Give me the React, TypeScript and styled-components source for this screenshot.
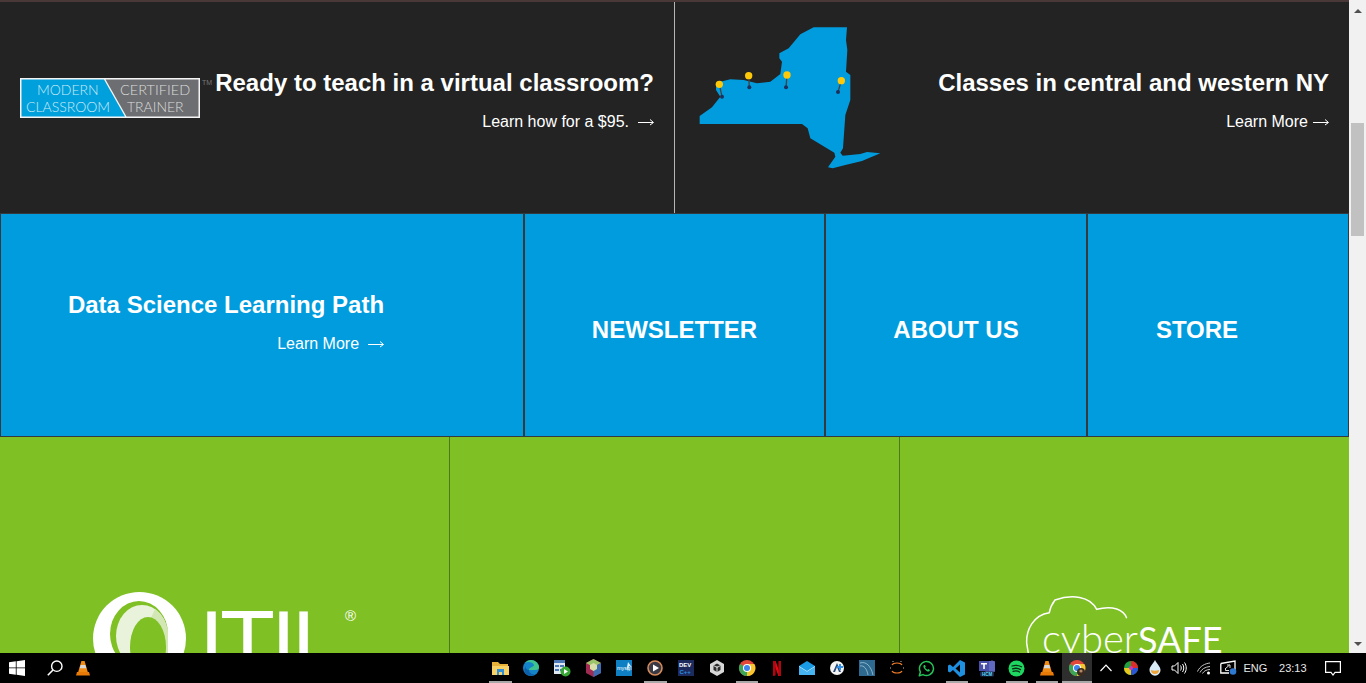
import * as React from 'react';
import styled, { createGlobalStyle } from 'styled-components';

const colors = {
    dark: '#232323',
    blue: '#009cde',
    green: '#7fc025',
    line: '#33393d',
    white: '#ffffff',
};

const GlobalStyle = createGlobalStyle`
    html, body {
        margin: 0;
        padding: 0;
        overflow: hidden;
        background: #000;
    }
    * {
        box-sizing: border-box;
    }
`;

const Frame = styled.div`
    width: 1366px;
    height: 683px;
    display: flex;
    flex-direction: column;
    font-family: 'Liberation Sans', Arial, sans-serif;
    color: ${colors.white};
    overflow: hidden;
`;

const Viewport = styled.div`
    height: 653px;
    display: flex;
    overflow: hidden;
`;

const Content = styled.div`
    width: 1349px;
    display: flex;
    flex-direction: column;
`;

const TopStripe = styled.div`
    height: 2px;
    background: #4a3838;
`;

const DarkRow = styled.div`
    height: 211px;
    display: grid;
    grid-template-columns: 675px 674px;
    background: ${colors.dark};
`;

const DarkCell = styled.div<{ $divider?: boolean }>`
    display: flex;
    justify-content: space-between;
    align-items: flex-start;
    padding: 0 20px;
    border-right: ${(p) => (p.$divider ? '1px solid #b5b5b5' : '0')};
`;

const LogoWrap = styled.div`
    margin-top: 76px;
    display: flex;
`;

const TradeMark = styled.span`
    font-size: 7px;
    color: #777;
    margin: 1px 0 0 2px;
`;

const MapWrap = styled.div`
    margin: 24px 0 0 2px;
    display: flex;
`;

const Promo = styled.div`
    padding-top: 63px;
    text-align: right;
`;

const Heading = styled.div`
    font-size: 24px;
    line-height: 36px;
    font-weight: 700;
`;

const LearnLink = styled.div`
    display: flex;
    justify-content: flex-end;
    align-items: center;
    font-size: 16px;
    line-height: 24px;
    margin-top: 9px;
`;

const LinkArrow = styled.svg<{ $gap: number }>`
    margin-left: ${(p) => p.$gap}px;
`;

const BlueRow = styled.div`
    height: 224px;
    display: grid;
    grid-template-columns: 524px 301px 262px 262px;
    background: ${colors.blue};
`;

const BlueCell = styled.div<{ $shift?: number }>`
    display: flex;
    align-items: center;
    justify-content: center;
    border: 1px solid ${colors.line};
    padding-top: 9px;
    padding-right: ${(p) => p.$shift || 0}px;
`;

const PathBlock = styled.div`
    text-align: right;
    margin: 0 72px 16px 0;
`;

const CellLabel = styled.div`
    font-size: 24px;
    font-weight: 700;
`;

const GreenRow = styled.div`
    flex: 1;
    display: grid;
    grid-template-columns: 450px 450px 449px;
    background: ${colors.green};
`;

const GreenCell = styled.div<{ $divider?: boolean }>`
    overflow: hidden;
    border-right: ${(p) => (p.$divider ? '1px solid #4c7a17' : '0')};
`;

const ItilLogo = styled.svg`
    display: block;
    margin: 150px 0 0 85px;
`;

const CyberLogo = styled.svg`
    display: block;
    margin: 155px 0 0 120px;
`;

const Scrollbar = styled.div`
    width: 17px;
    background: #f1f1f1;
    display: flex;
    flex-direction: column;
    align-items: center;
`;

const ScrollArrow = styled.div<{ $down?: boolean }>`
    height: 17px;
    width: 17px;
    display: flex;
    align-items: center;
    justify-content: center;
    margin-top: ${(p) => (p.$down ? 'auto' : '2px')};
    margin-bottom: ${(p) => (p.$down ? '1px' : '0')};

    &::after {
        content: '';
        border-left: 4px solid transparent;
        border-right: 4px solid transparent;
        border-${(p) => (p.$down ? 'top' : 'bottom')}: 4px solid #505050;
    }
`;

const ScrollThumb = styled.div`
    width: 13px;
    height: 113px;
    margin-top: 104px;
    background: #c1c1c1;
`;

const Taskbar = styled.div`
    height: 30px;
    display: flex;
    align-items: stretch;
    background: #000;
`;

const LeftGroup = styled.div`
    display: flex;
    width: 484.5px;
`;

const StartButton = styled.div`
    width: 34px;
    display: flex;
    align-items: center;
    justify-content: center;
`;

const SearchButton = styled.div`
    width: 42px;
    display: flex;
    align-items: center;
    justify-content: center;
`;

const SearchCone = styled.div`
    width: 14px;
    display: flex;
    align-items: center;
    justify-content: center;
`;

const TaskIcon = styled.div<{ $wide?: boolean; $open?: boolean; $active?: boolean }>`
    position: relative;
    width: ${(p) => (p.$wide ? 31 : 30)}px;
    display: flex;
    align-items: center;
    justify-content: center;
    background: ${(p) => (p.$active ? '#2e2e2e' : 'transparent')};

    &::after {
        content: '';
        display: ${(p) => (p.$open ? 'block' : 'none')};
        position: absolute;
        left: ${(p) => (p.$active ? '0' : '4px')};
        right: ${(p) => (p.$active ? '0' : '4px')};
        bottom: 0;
        height: 2px;
        background: #a8a8a8;
    }
`;

const Tray = styled.div`
    display: flex;
    align-items: center;
    margin-left: 2.5px;
`;

const TrayIcon = styled.div`
    width: 24.4px;
    display: flex;
    align-items: center;
    justify-content: center;
`;

const TrayText = styled.div<{ $width: number }>`
    width: ${(p) => p.$width}px;
    text-align: center;
    font-size: 11px;
    color: #e8e8e8;
`;

const NotifyButton = styled.div`
    width: 36px;
    display: flex;
    align-items: center;
    justify-content: center;
`;

const Arrow = ({ gap }: { gap: number }) => (
    <LinkArrow $gap={gap} width="16" height="8" viewBox="0 0 16 8">
        <path d="M0 4.5h15M12 1.5l3.5 3-3.5 2.5" fill="none" stroke="#fff" strokeWidth="1" />
    </LinkArrow>
);

const Cone = () => (
    <svg width="14" height="16" viewBox="0 0 14 16">
        <path d="M5.4 1h3.2l3.2 11H2.2z" fill="#f08a12" />
        <path d="M4.6 5h4.8l.9 3.3H3.7z" fill="#d9d9d9" />
        <path d="M1 12h12l1 3.5H0z" fill="#e87a08" />
    </svg>
);

const Chrome = ({ badge }: { badge?: boolean }) => (
    <svg width="18" height="18" viewBox="0 0 18 18">
        <circle cx="9" cy="9" r="8" fill="#e2483a" />
        <path d="M9 9 2 13A8 8 0 0 1 2.1 5z" fill="#3aa757" />
        <path d="M9 9l-7 4a8 8 0 0 0 7 4c1.4 0 2.6-.3 3.6-1z" fill="#3aa757" />
        <path d="M9 5h7.4A8 8 0 0 1 9 17z" fill="#f8c52c" />
        <circle cx="9" cy="9" r="4" fill="#fff" />
        <circle cx="9" cy="9" r="3" fill="#3f83ec" />
        {badge && <circle cx="13" cy="13" r="4" fill="#3a2a20" />}
        {badge && <circle cx="13" cy="12" r="1.6" fill="#b58a66" />}
    </svg>
);

const pinned: { key: string; wide?: boolean; open?: boolean; active?: boolean; icon: React.ReactNode }[] = [
    {
        key: 'explorer',
        wide: true,
        open: true,
        icon: (
            <svg width="17" height="15" viewBox="0 0 17 15">
                <path d="M0 1h6l2 2h8v3H0z" fill="#e8b23a" />
                <path d="M0 5h17v9H0z" fill="#f8d267" />
                <path d="M5 8h7v6h-2v-3H7v3H5z" fill="#2f8fd8" />
            </svg>
        ),
    },
    {
        key: 'edge',
        wide: true,
        icon: (
            <svg width="18" height="18" viewBox="0 0 18 18">
                <circle cx="9" cy="9" r="8" fill="#1583c9" />
                <path d="M3 4c3-4 10-4 13 1 2 3 1 6-2 6H7c0-3 5-3 5-5-1-3-6-4-9-2z" fill="#3ec28f" />
                <path d="M7 11c0 3 3 5 6 4-3 3-8 2-10-1-1-2-1-5 1-7-1 2 1 4 3 4z" fill="#0c5fa8" />
            </svg>
        ),
    },
    {
        key: 'tasks',
        wide: true,
        icon: (
            <svg width="18" height="18" viewBox="0 0 18 18">
                <path d="M1 1h11v14H1z" fill="#dfe7f2" />
                <path d="M1 1h11v3H1zM2 6h4v2H2zM7 6h4v2H7zM2 10h4v2H2zM7 10h4v2H7z" fill="#4d78b8" />
                <circle cx="12.5" cy="12.5" r="5" fill="#37a635" />
                <path d="M11 10l4 2.5-4 2.5z" fill="#fff" />
            </svg>
        ),
    },
    {
        key: 'box',
        wide: true,
        icon: (
            <svg width="15" height="18" viewBox="0 0 15 18">
                <path d="M7.5 0 15 4v10l-7.5 4L0 14V4z" fill="#a02a52" />
                <path d="M7.5 0 15 4 7.5 8 0 4z" fill="#9cc46a" />
                <path d="M7.5 8 15 4v10l-7.5 4z" fill="#3d6cb0" />
                <path d="M4 6l3.5-2L11 6v4l-3.5 2L4 10z" fill="#d8dfa8" />
            </svg>
        ),
    },
    {
        key: 'mysql',
        wide: true,
        icon: (
            <svg width="16" height="16" viewBox="0 0 16 16">
                <rect width="16" height="16" fill="#0f7fc4" />
                <text x="1" y="10" fontSize="5.5" fill="#fff" fontFamily="Liberation Sans, sans-serif">
                    mysql
                </text>
                <path d="M12 2c1 2 3 3 3 5l-2-1-1 6-1-5z" fill="#dff1fb" />
            </svg>
        ),
    },
    {
        key: 'player',
        wide: true,
        open: true,
        icon: (
            <svg width="16" height="16" viewBox="0 0 16 16">
                <circle cx="8" cy="8" r="7" fill="#3a3a44" stroke="#d88a5a" strokeWidth="1.6" />
                <path d="M6 4.5 12 8l-6 3.5z" fill="#fff" />
            </svg>
        ),
    },
    {
        key: 'devcpp',
        wide: true,
        icon: (
            <svg width="16" height="16" viewBox="0 0 16 16">
                <rect width="16" height="16" fill="#1c2a5e" />
                <text x="1" y="7" fontSize="6" fontWeight="700" fill="#fff" fontFamily="Liberation Sans, sans-serif">
                    DEV
                </text>
                <text x="1.5" y="14" fontSize="6" fontWeight="700" fill="#2b8fe0" fontFamily="Liberation Sans, sans-serif">
                    C++
                </text>
            </svg>
        ),
    },
    {
        key: 'unity',
        icon: (
            <svg width="14" height="16" viewBox="0 0 14 16">
                <path d="M7 0 14 4v8l-7 4-7-4V4z" fill="#d8d8d8" />
                <path d="M7 3.5 10.5 5.5v4.500L7 12 3.5 10V5.5z" fill="#2c2c2c" />
                <path d="M7 6v6M3.5 5.5 7 7.5l3.5-2" stroke="#d8d8d8" strokeWidth="1" fill="none" />
            </svg>
        ),
    },
    { key: 'chrome', open: true, icon: <Chrome /> },
    {
        key: 'netflix',
        icon: (
            <svg width="8" height="15" viewBox="0 0 8 15">
                <path d="M0 0h2.6L8 15H5.4z" fill="#e50914" />
                <path d="M0 0h2.6v14.6L0 15zM5.4 0H8v15l-2.6-.4z" fill="#b0060f" />
            </svg>
        ),
    },
    {
        key: 'mail',
        icon: (
            <svg width="16" height="14" viewBox="0 0 16 14">
                <path d="M0 5 8 0l8 5v9H0z" fill="#1a9be6" />
                <path d="M0 5l8 5 8-5v1l-8 5-8-5z" fill="#bfe6fb" />
                <path d="M0 6l8 5 8-5v8H0z" fill="#45b4f0" />
            </svg>
        ),
    },
    {
        key: 'studio',
        icon: (
            <svg width="16" height="16" viewBox="0 0 16 16">
                <circle cx="8" cy="8" r="7" fill="#f4f4f4" />
                <path d="M8 3 4 12h2l2-5 2 5h2z" fill="#2a4a78" />
                <path d="M10 4h2v2h2v2h-2v2h-2V8H8V6h2z" fill="#2d8fe8" />
            </svg>
        ),
    },
    {
        key: 'workbench',
        icon: (
            <svg width="16" height="16" viewBox="0 0 16 16">
                <rect width="16" height="16" fill="#2e6a8f" />
                <path d="M1 3c6-2 11 3 13 12M1 6c4-1 7 3 8 9" stroke="#9fc4d8" strokeWidth=".8" fill="none" />
            </svg>
        ),
    },
    {
        key: 'brackets',
        icon: (
            <svg width="14" height="14" viewBox="0 0 14 14">
                <path d="M2 4c1-2 3-2 5-2s4 0 5 2" stroke="#ee7a2a" strokeWidth="1.2" fill="none" />
                <path d="M2 10c1 2 3 2 5 2s4 0 5-2" stroke="#ee7a2a" strokeWidth="1.2" fill="none" />
                <path d="M0 7h1M13 7h1M3 0v1M11 0v1" stroke="#bbb" strokeWidth="1" />
            </svg>
        ),
    },
    {
        key: 'whatsapp',
        icon: (
            <svg width="17" height="17" viewBox="0 0 17 17">
                <path
                    d="M1.3 15.7 2.4 12A7 7 0 1 1 5 14.6z"
                    fill="none"
                    stroke="#25c25a"
                    strokeWidth="1.5"
                    strokeLinejoin="round"
                />
                <path
                    d="M6 5c-1 1-.8 2.4.8 4.2S10 12 11.3 11.3l.7-1.300-1.800-1-.8.8C8.500 9.500 7.500 8.500 7.100 7.600l.7-.8L7 5z"
                    fill="#25c25a"
                />
            </svg>
        ),
    },
    {
        key: 'vscode',
        open: true,
        icon: (
            <svg width="17" height="17" viewBox="0 0 17 17">
                <path
                    d="M12 0 17 2.4v12.2L12 17 5 10l-3 2.5-2-1V5.5l2-1L5 7zM12 4.5 7.5 8.5l4.5 4z"
                    fill="#1f8fe0"
                />
            </svg>
        ),
    },
    {
        key: 'teams',
        icon: (
            <svg width="18" height="18" viewBox="0 0 18 18">
                <circle cx="14" cy="3.5" r="2" fill="#7b83d8" />
                <rect x="7" y="2" width="10" height="11" rx="1" fill="#6068c0" />
                <rect x="1" y="2" width="10" height="10" fill="#4a50a8" />
                <path d="M3 4h6v1.5H6.8V10H5.2V5.5H3z" fill="#fff" />
                <rect x="2" y="12.5" width="14" height="5" rx="1" fill="#162a4a" />
                <text x="4" y="16.8" fontSize="4.5" fontWeight="700" fill="#5fd4f4" fontFamily="Liberation Sans, sans-serif">
                    HCM
                </text>
            </svg>
        ),
    },
    {
        key: 'spotify',
        open: true,
        icon: (
            <svg width="17" height="17" viewBox="0 0 17 17">
                <circle cx="8.5" cy="8.5" r="8" fill="#1ed760" />
                <path
                    d="M4 6c3-1 7-.6 9.5.8M4.5 8.8c2.5-.8 6-.5 8 .8M5 11.3c2-.6 5-.4 6.5.7"
                    stroke="#0c2a14"
                    strokeWidth="1.3"
                    fill="none"
                    strokeLinecap="round"
                />
            </svg>
        ),
    },
    { key: 'vlc', open: true, icon: <Cone /> },
    { key: 'active-chrome', open: true, active: true, icon: <Chrome badge /> },
];

export default function App() {
    return (
        <Frame>
            <GlobalStyle />
            <Viewport>
                <Content>
                    <TopStripe />
                    <DarkRow>
                        <DarkCell $divider>
                            <LogoWrap>
                                <svg width="180" height="40" viewBox="0 0 180 40">
                                    <rect width="180" height="40" fill="#f4f4f4" />
                                    <path d="M1.5 1.5h82.5l21 37H1.5z" fill="#00a0dc" />
                                    <path d="M85.5 1.5h93v37h-72z" fill="#6d6e71" />
                                    <g fontFamily="Lato, sans-serif" fontWeight="300" fontSize="14" fill="#cfeaf6">
                                        <text x="17" y="17">MODERN</text>
                                        <text x="6" y="33.5">CLASSROOM</text>
                                    </g>
                                    <g fontFamily="Lato, sans-serif" fontWeight="300" fontSize="14.5" fill="#dcdcdc">
                                        <text x="100" y="17">CERTIFIED</text>
                                        <text x="107" y="33.5" fontSize="14">TRAINER</text>
                                    </g>
                                </svg>
                                <TradeMark>TM</TradeMark>
                            </LogoWrap>
                            <Promo>
                                <Heading>Ready to teach in a virtual classroom?</Heading>
                                <LearnLink>
                                    Learn how for a $95.
                                    <Arrow gap={9} />
                                </LearnLink>
                            </Promo>
                        </DarkCell>
                        <DarkCell>
                            <MapWrap>
                                <svg width="190" height="145" viewBox="80 78 570 435">
                                    <path
                                        d="M430 82 530 82 527 120 531 150 527 215 540 225 540 300 525 345 518 445 510 458 517 467 570 462 590 456 630 460 575 483 525 495 487 505 473 502 495 470 492 458 420 415 412 385 395 372 88 372 88 348 125 322 150 290 137 270 137 255 150 245 180 238 220 240 260 250 300 245 330 222 335 185 327 175 327 160 355 145 390 103Z"
                                        fill="#009cde"
                                    />
                                    <g stroke="#444" strokeWidth="4" fill="none">
                                        <path d="M147 253 155 290M235 227 237 262M350 225 347 262M513 242 503 276" />
                                    </g>
                                    <g fill="#1e2f5c">
                                        <circle cx="155" cy="290" r="6" />
                                        <circle cx="237" cy="262" r="6" />
                                        <circle cx="347" cy="262" r="6" />
                                        <circle cx="503" cy="276" r="6" />
                                    </g>
                                    <g fill="#ffc90a">
                                        <circle cx="147" cy="253" r="11" />
                                        <circle cx="235" cy="227" r="11" />
                                        <circle cx="350" cy="225" r="11" />
                                        <circle cx="513" cy="242" r="11" />
                                    </g>
                                </svg>
                            </MapWrap>
                            <Promo>
                                <Heading>Classes in central and western NY</Heading>
                                <LearnLink>
                                    Learn More
                                    <Arrow gap={5} />
                                </LearnLink>
                            </Promo>
                        </DarkCell>
                    </DarkRow>
                    <BlueRow>
                        <BlueCell>
                            <PathBlock>
                                <Heading>Data Science Learning Path</Heading>
                                <LearnLink>
                                    Learn More
                                    <Arrow gap={9} />
                                </LearnLink>
                            </PathBlock>
                        </BlueCell>
                        <BlueCell>
                            <CellLabel>NEWSLETTER</CellLabel>
                        </BlueCell>
                        <BlueCell>
                            <CellLabel>ABOUT US</CellLabel>
                        </BlueCell>
                        <BlueCell $shift={42}>
                            <CellLabel>STORE</CellLabel>
                        </BlueCell>
                    </BlueRow>
                    <GreenRow>
                        <GreenCell $divider>
                            <ItilLogo width="290" height="66" viewBox="85 587 290 66">
                                <circle cx="139.5" cy="638.5" r="46.5" fill="#fff" />
                                <ellipse cx="139" cy="634" rx="29" ry="33" fill={colors.green} />
                                <ellipse cx="142" cy="636" rx="26" ry="31" fill="#e9f3dc" />
                                <path d="M155 609A26 31 0 0 1 168 636V653H150V620Z" fill="#d3e7b4" />
                                <ellipse cx="148" cy="647" rx="18" ry="30" fill={colors.green} />
                                <text
                                    x="199"
                                    y="674"
                                    fontFamily="Liberation Sans, sans-serif"
                                    fontSize="90"
                                    letterSpacing="-4"
                                    fill="#fff"
                                >
                                    ITIL
                                </text>
                                <text x="345" y="621" fontFamily="Liberation Sans, sans-serif" fontSize="15" fill="#fff">
                                    ®
                                </text>
                            </ItilLogo>
                        </GreenCell>
                        <GreenCell $divider />
                        <GreenCell>
                            <CyberLogo width="220" height="61" viewBox="1020 592 220 61">
                                <path
                                    d="M1126.7 618.3C1124 610 1113 605 1096.7 609.3C1090 596 1071.7 594 1055 600C1052 604 1050 608 1049.3 612.7C1033.3 615 1026 630 1026.7 643.3L1028.3 653"
                                    fill="none"
                                    stroke="#fff"
                                    strokeWidth="1.5"
                                />
                                <text x="1042" y="653" fontFamily="Lato, sans-serif" fill="#fff">
                                    <tspan fontWeight="300" fontSize="40">cyber</tspan>
                                    <tspan fontWeight="400" fontSize="36">SAFE</tspan>
                                </text>
                            </CyberLogo>
                        </GreenCell>
                    </GreenRow>
                </Content>
                <Scrollbar>
                    <ScrollArrow />
                    <ScrollThumb />
                    <ScrollArrow $down />
                </Scrollbar>
            </Viewport>
            <Taskbar>
                <LeftGroup>
                    <StartButton>
                        <svg width="16" height="16" viewBox="0 0 16 16">
                            <path
                                d="M0 2.3 6.8 1.3V7.5H0zM7.6 1.2 16 0V7.5H7.6zM0 8.3H6.8V14.700L0 13.700zM7.6 8.3H16V16L7.6 14.8z"
                                fill="#fff"
                            />
                        </svg>
                    </StartButton>
                    <SearchButton>
                        <svg width="16" height="16" viewBox="0 0 16 16">
                            <circle cx="9.8" cy="6.2" r="5.2" fill="none" stroke="#fff" strokeWidth="1.4" />
                            <path d="M6 10 .8 15.2" stroke="#fff" strokeWidth="1.6" />
                        </svg>
                    </SearchButton>
                    <SearchCone>
                        <Cone />
                    </SearchCone>
                </LeftGroup>
                {pinned.map((item) => (
                    <TaskIcon key={item.key} $wide={item.wide} $open={item.open} $active={item.active}>
                        {item.icon}
                    </TaskIcon>
                ))}
                <Tray>
                    <TrayIcon>
                        <svg width="12" height="8" viewBox="0 0 12 8">
                            <path d="M.5 7 6 1.2 11.5 7" fill="none" stroke="#fff" strokeWidth="1.2" />
                        </svg>
                    </TrayIcon>
                    <TrayIcon>
                        <svg width="14" height="14" viewBox="0 0 14 14">
                            <circle cx="7" cy="7" r="7" fill="#22a040" />
                            <path d="M7 7V0A7 7 0 0 1 14 7z" fill="#e02b2b" />
                            <path d="M7 7h7a7 7 0 0 1-7 7z" fill="#2a55d8" />
                            <path d="M7 7v7A7 7 0 0 1 0 7z" fill="#e8c81a" />
                            <circle cx="7" cy="7" r="2" fill="#c83ab8" />
                        </svg>
                    </TrayIcon>
                    <TrayIcon>
                        <svg width="12" height="16" viewBox="0 0 12 16">
                            <path d="M6 0C8 4 11.5 6.5 11.5 10.2A5.5 5.5 0 0 1 .5 10.2C.5 6.5 4 4 6 0z" fill="#d8eaf6" />
                            <path d="M2 10c2 1 5 1 8 0a4 4 0 0 1-8 0z" fill="#eda23a" />
                        </svg>
                    </TrayIcon>
                    <TrayIcon>
                        <svg width="16" height="14" viewBox="0 0 16 14">
                            <path d="M1 5h2.5L7 1.5v11L3.5 9H1z" fill="none" stroke="#fff" />
                            <path
                                d="M9.5 4.5c1 1.500 1 3.500 0 5M11.500 3c1.700 2.400 1.700 5.600 0 8M13.500 1.500c2.300 3.300 2.300 7.700 0 11"
                                fill="none"
                                stroke="#fff"
                            />
                        </svg>
                    </TrayIcon>
                    <TrayIcon>
                        <svg width="14" height="13" viewBox="0 0 14 13">
                            <path
                                d="M.5 9.5C3 4 8 1.5 13 1M3 10.5c1.600-3.500 5-5.500 10-6M5.500 11.500c1-2 3.500-4 7.500-4"
                                fill="none"
                                stroke="#c8c8c8"
                            />
                            <circle cx="11.5" cy="11" r="1.5" fill="#fff" />
                        </svg>
                    </TrayIcon>
                    <TrayIcon>
                        <svg width="17" height="16" viewBox="0 0 17 16">
                            <path d="M.8 3.5 15 1v9" fill="none" stroke="#fff" strokeWidth="1.3" />
                            <path d="M.8 3.5V13H9" fill="none" stroke="#fff" strokeWidth="1.3" />
                            <path d="M5 9 9.5 5M7 5h3v3M5.5 8v2.5H9" fill="none" stroke="#ddd" />
                            <circle cx="13" cy="11.5" r="3.3" fill="#2f78d0" />
                        </svg>
                    </TrayIcon>
                    <TrayText $width={30}>ENG</TrayText>
                    <TrayText $width={45}>23:13</TrayText>
                    <NotifyButton>
                        <svg width="16" height="15" viewBox="0 0 16 15">
                            <path d="M.6.6h14.8v10.800H10L8 14l-2-2.600H.6z" fill="none" stroke="#fff" strokeWidth="1.2" />
                        </svg>
                    </NotifyButton>
                </Tray>
            </Taskbar>
        </Frame>
    );
}
